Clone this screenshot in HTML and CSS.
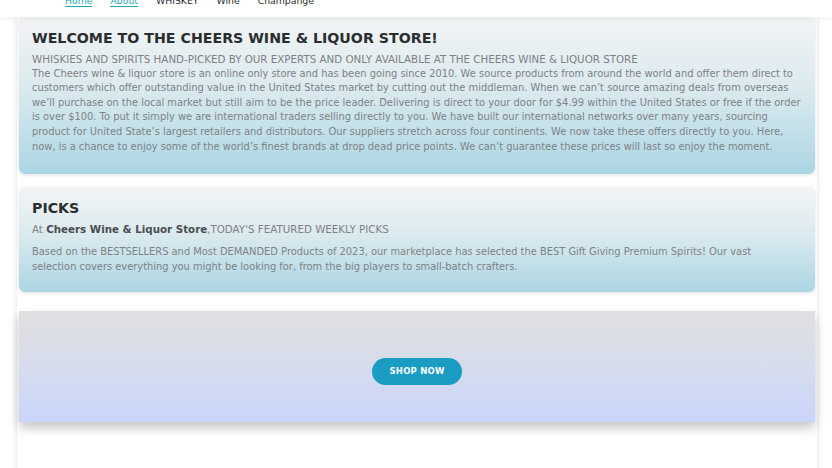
FILE: index.html
```html
<!DOCTYPE html>
<html lang="en">
<head>
  <meta charset="UTF-8">
  <meta name="viewport" content="width=device-width, initial-scale=1.0">
  <title>Cheers Wine &amp; Liquor Store</title>
  <link rel="stylesheet" href="styles.css">
</head>
<body>
  <header class="topbar">
    <nav class="nav">
      <a href="#" class="active">Home</a>
      <a href="#" class="active">About</a>
      <a href="#">WHISKEY</a>
      <a href="#">Wine</a>
      <a href="#">Champange</a>
    </nav>
  </header>

  <main class="page">
    <section class="card">
      <h2>WELCOME TO THE CHEERS WINE &amp; LIQUOR STORE!</h2>
      <p class="lead">WHISKIES AND SPIRITS HAND-PICKED BY OUR EXPERTS AND ONLY AVAILABLE AT THE CHEERS WINE &amp; LIQUOR STORE</p>
      <p>The Cheers wine &amp; liquor store is an online only store and has been going since 2010. We source products from around the world and offer them direct to customers which offer outstanding value in the United States market by cutting out the middleman. When we can’t source amazing deals from overseas we’ll purchase on the local market but still aim to be the price leader. Delivering is direct to your door for $4.99 within the United States or free if the order is over $100. To put it simply we are international traders selling directly to you. We have built our international networks over many years, sourcing product for United State’s largest retailers and distributors. Our suppliers stretch across four continents. We now take these offers directly to you. Here, now, is a chance to enjoy some of the world’s finest brands at drop dead price points. We can’t guarantee these prices will last so enjoy the moment.</p>
    </section>

    <section class="card picks">
      <h2>PICKS</h2>
      <p class="lead">At <b>Cheers Wine &amp; Liquor Store</b>,TODAY'S FEATURED WEEKLY PICKS</p>
      <p class="spaced">Based on the BESTSELLERS and Most DEMANDED Products of 2023, our marketplace has selected the BEST Gift Giving Premium Spirits! Our vast selection covers everything you might be looking for, from the big players to small-batch crafters.</p>
    </section>

    <section class="shop">
      <a href="#" class="btn">SHOP NOW</a>
    </section>
  </main>
</body>
</html>
```

FILE: styles.css
```css
:root {
  --text: #7f8184;
  --dark: #2b2d2f;
  --teal: #27a7b4;
  --btn: #1a9cc3;
}

body {
  margin: 0;
  font-family: 'DejaVu Sans', sans-serif;
  background: #fff;
  color: var(--text);
  overflow: hidden;
}

.topbar {
  display: flow-root;
  height: 17px;
  background: #fff;
  box-shadow: 0 2px 6px rgba(0,0,0,0.06);
  position: relative;
  z-index: 2;
}

.nav {
  display: flex;
  gap: 18px;
  padding-left: 65px;
  margin-top: -5px;
}

.nav a {
  font-size: 9.3px;
  color: var(--dark);
  text-decoration: none;
  line-height: 11px;
}

.nav a.active {
  color: var(--teal);
  border-bottom: 1.5px solid var(--teal);
}

.page {
  width: 796px;
  margin-left: 17px;
  background: #fff;
  box-shadow: 0 0 6px rgba(0,0,0,0.12);
  padding: 0 2px 60px 2px;
  min-height: 500px;
}

.card {
  border-radius: 6px;
  padding: 10px 13px 20px;
  background: linear-gradient(180deg, #f2f4f5 0%, #dbeaef 45%, #abd6e3 100%);
  box-shadow: 0 1px 4px rgba(0,0,0,0.12);
  margin-bottom: 13px;
  font-size: 9.9px;
  line-height: 14.6px;
}

.card h2 {
  margin: 0 0 3px;
  font-size: 14.2px;
  line-height: 22px;
  color: var(--dark);
  font-weight: 700;
}

.card p {
  margin: 0;
}

.card .lead {
  font-size: 10.3px;
}

.card b {
  color: #4a4c4f;
}

.picks {
  padding-bottom: 18px;
  margin-bottom: 19px;
}

.picks .spaced {
  margin-top: 7px;
  max-width: 735px;
  line-height: 15px;
}

.shop {
  height: 111px;
  display: flex;
  align-items: center;
  justify-content: center;
  background: linear-gradient(180deg, #e0e0e1 0%, #d6dcec 50%, #c9d5fb 100%);
  box-shadow: 0 6px 10px rgba(0,0,0,0.22);
}

.btn {
  display: inline-block;
  background: var(--btn);
  color: #fff;
  font-size: 8.5px;
  font-weight: 700;
  text-decoration: none;
  letter-spacing: 0.2px;
  padding: 8px 18px;
  border-radius: 14px;
  line-height: 11px;
  margin-top: 10px;
}
```
